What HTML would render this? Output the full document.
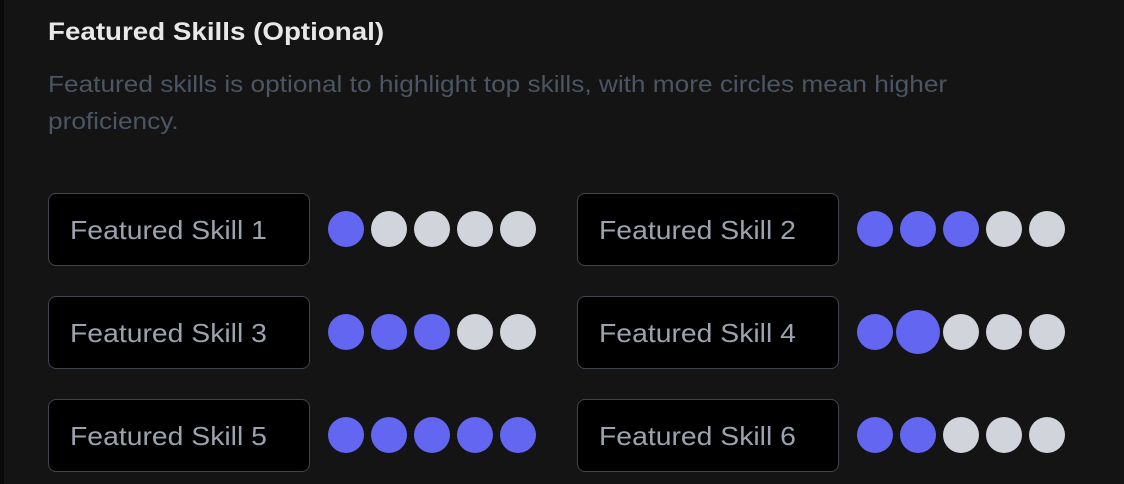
<!DOCTYPE html>
<html><head><style>
body{margin:0;width:1124px;height:484px;background:#141414;font-family:"Liberation Sans",sans-serif;position:relative;overflow:hidden}
.strip{position:absolute;left:0;top:0;width:4px;height:484px;background:#0a0a0a}
h1{position:absolute;left:48px;top:18px;margin:0;font-size:25px;font-weight:600;color:#e8e8e8;transform:scaleX(1.11);transform-origin:left;white-space:nowrap}
p{position:absolute;left:48px;top:66px;margin:0;font-size:23px;line-height:37px;color:#4b5563;transform:scaleX(1.14);transform-origin:left;white-space:nowrap}
.box{position:absolute;width:260px;height:71px;border:1px solid #3f444d;border-radius:8px;background:#000;box-sizing:content-box}
.box span{position:absolute;left:21px;top:21px;font-size:26px;color:#9ca3af;transform:scaleX(1.09);transform-origin:left;white-space:nowrap}
.c{position:absolute;width:36px;height:36px;border-radius:50%;background:#d1d5db}
.c.on{background:#6366f1}
</style></head><body>
<div class="strip"></div>
<h1>Featured Skills (Optional)</h1>
<p>Featured skills is optional to highlight top skills, with more circles mean higher<br>proficiency.</p>
<div id="g"></div>
<script>
var rows=[[48,193,1,1],[577,193,2,3],[48,296,3,3],[577,296,4,2],[48,399,5,5],[577,399,6,2]];
var h='';
rows.forEach(function(r){
 h+='<div class="box" style="left:'+r[0]+'px;top:'+r[1]+'px"><span>Featured Skill '+r[2]+'</span></div>';
 var cy=r[1]+36;
 for(var i=0;i<5;i++){
  var cx=r[0]+298+i*43, d=36;
  if(r[2]==4&&i==1){d=44;}
  h+='<div class="c'+(i<r[3]?' on':'')+'" style="width:'+d+'px;height:'+d+'px;left:'+(cx-d/2)+'px;top:'+(cy-d/2)+'px"></div>';
 }
});
document.getElementById('g').innerHTML=h;
</script>
</body></html>
